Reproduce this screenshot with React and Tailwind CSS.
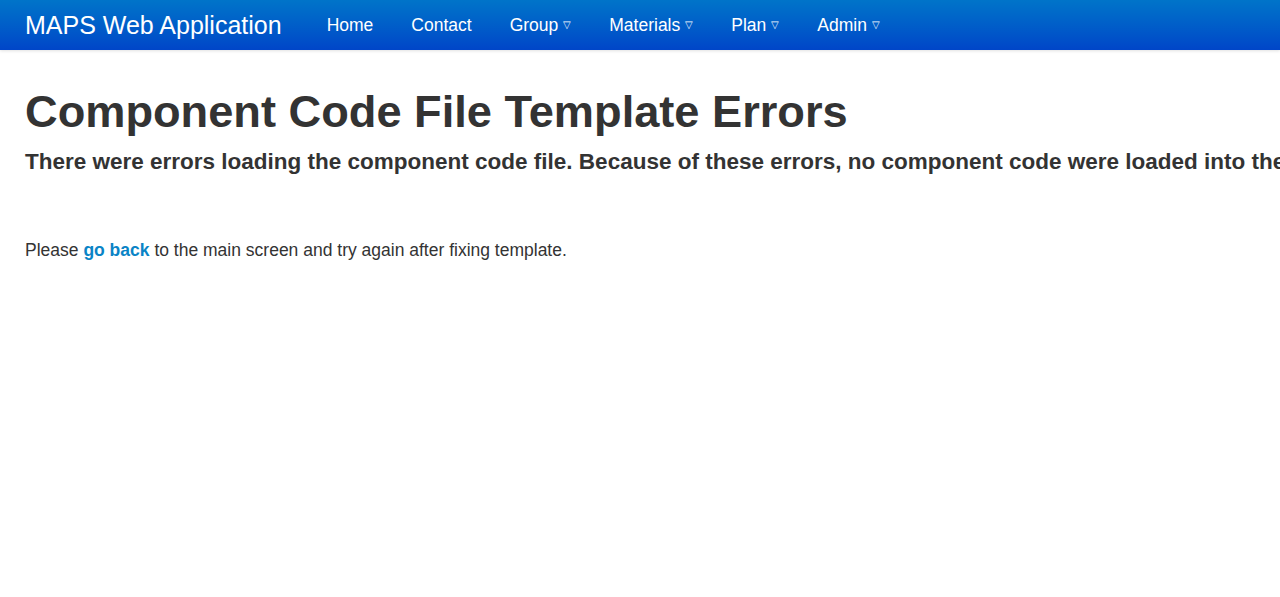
import React from "react";

const navItems = [
  { label: "Home" },
  { label: "Contact" },
  { label: "Group", menu: true },
  { label: "Materials", menu: true },
  { label: "Plan", menu: true },
  { label: "Admin", menu: true },
];

export default function App() {
  return (
    <div className="min-h-[597px] w-[1280px] overflow-hidden bg-white font-['Liberation_Sans',Arial,sans-serif]">
      <nav className="flex h-[50px] items-center bg-gradient-to-b from-[#0074c9] to-[#0045c8] shadow-[0_1px_3px_rgba(0,0,0,0.12)]">
        <a className="ml-[25px] text-[25px] leading-none text-white">MAPS Web Application</a>
        <ul className="ml-[26px] flex items-center">
          {navItems.map((item) => (
            <li key={item.label} className="flex items-center px-[19px] text-[17.5px] text-white">
              {item.label}
              {item.menu && <span className="ml-[5px] text-[10px] leading-none">▽</span>}
            </li>
          ))}
        </ul>
      </nav>

      <main className="px-[25px] pt-[38px] text-[#333]">
        <h1 className="whitespace-nowrap text-[45.2px] font-bold leading-[48px]">
          Component Code File Template Errors
        </h1>
        <h2 className="mt-[13px] whitespace-nowrap text-[22.5px] font-bold leading-[26px]">
          There were errors loading the component code file. Because of these errors, no component code were loaded into the system.
        </h2>
        <p className="mt-[64px] text-[17.5px] leading-[22px]">
          Please <a className="font-bold text-[#0a84c6]">go back</a> to the main screen and try again after fixing template.
        </p>
      </main>
    </div>
  );
}
